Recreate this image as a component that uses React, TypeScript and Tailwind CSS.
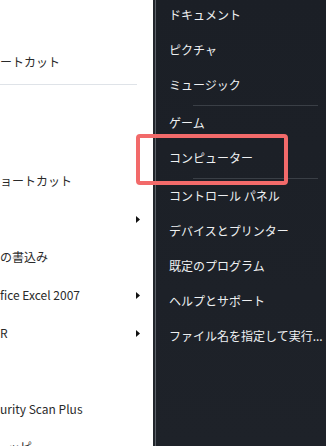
const font = { fontFamily: '"Noto Sans CJK JP", "Noto Sans", sans-serif' };

function Arrow() {
  return (
    <svg width="4" height="7" viewBox="0 0 4 7" className="ml-auto mr-[13px] shrink-0">
      <polygon points="0,0 4,3.5 0,7" fill="#111" />
    </svg>
  );
}

function LeftRow({ text = "", arrow = false, pad = 0 }: { text?: string; arrow?: boolean; pad?: number }) {
  return (
    <div className="flex h-[38px] shrink-0 items-center">
      <span className="whitespace-nowrap text-[12px] text-[#2a2a2a]" style={pad ? { paddingLeft: pad } : undefined}>
        {text}
      </span>
      {arrow && <Arrow />}
    </div>
  );
}

function RightRow({ text }: { text: string }) {
  return (
    <div className="flex h-[35px] shrink-0 items-center pl-[13px]">
      <span className="whitespace-nowrap text-[12px] text-[#eef0f2]">{text}</span>
    </div>
  );
}

function RightSep() {
  return (
    <div className="h-[3px] shrink-0">
      <div className="ml-[37px] mr-[8px] h-px translate-y-[3px] bg-[#3a3f46]" />
    </div>
  );
}

export default function App() {
  return (
    <div className="relative flex h-[446px] w-[326px] overflow-hidden" style={font}>
      <div className="flex w-[153px] shrink-0 flex-col bg-white">
        <div className="h-[43px] shrink-0" />
        <LeftRow text="ートカット" />
        <div className="h-[5px] shrink-0 pt-[3px]">
          <div className="mr-[16px] h-px bg-[#dfe3e8]" />
        </div>
        <LeftRow />
        <LeftRow />
        <LeftRow text="ョートカット" />
        <LeftRow arrow />
        <LeftRow text="の書込み" />
        <LeftRow text="fice Excel 2007" arrow />
        <LeftRow text="R" arrow />
        <LeftRow />
        <LeftRow text="urity Scan Plus" />
        <LeftRow text="ッピ" pad={8} />
      </div>
      <div className="w-[2px] shrink-0 bg-[#22262c]" />
      <div className="w-px shrink-0 bg-[#5c6168]" />
      <div className="flex flex-1 flex-col bg-gradient-to-b from-[#1b1f26] to-[#1e2229]">
        <div className="-mt-[3px] flex flex-col">
          <RightRow text="ドキュメント" />
          <RightRow text="ピクチャ" />
          <RightRow text="ミュージック" />
          <RightSep />
          <RightRow text="ゲーム" />
          <RightRow text="コンピューター" />
          <RightSep />
          <RightRow text="コントロール パネル" />
          <RightRow text="デバイスとプリンター" />
          <RightRow text="既定のプログラム" />
          <RightRow text="ヘルプとサポート" />
          <RightRow text="ファイル名を指定して実行..." />
        </div>
      </div>
      <div className="pointer-events-none absolute left-[136px] top-[134px] h-[51px] w-[152px] rounded-[4px] border-4 border-[#f26a6a]" />
    </div>
  );
}
